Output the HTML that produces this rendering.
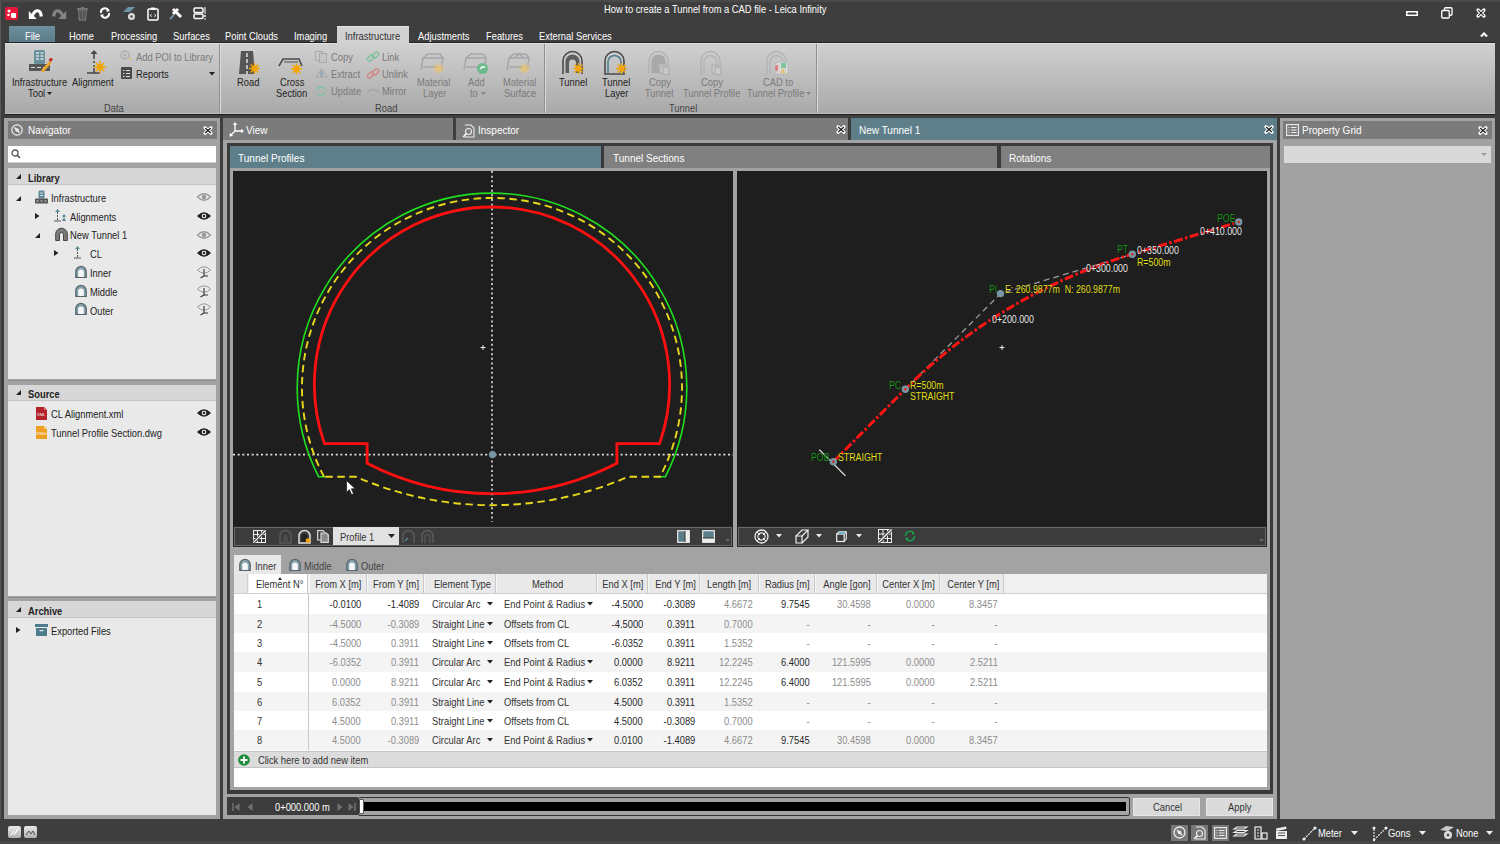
<!DOCTYPE html>
<html><head><meta charset="utf-8">
<style>
*{box-sizing:border-box;margin:0;padding:0}
html,body{width:1500px;height:844px;overflow:hidden;background:#3e3e3e;font-family:"Liberation Sans",sans-serif;font-size:11px;color:#222}
.a{position:absolute}
.t{position:absolute;white-space:nowrap;line-height:12px;font-size:11px;transform:scaleX(.85);transform-origin:0 0}
.w{color:#fff}
.g{color:#7a7a7a}
.b{font-weight:bold}
svg{position:absolute;overflow:visible}
.r{text-align:right;transform-origin:100% 0}
.h{transform:scaleX(.91)}
</style></head><body>
<!-- TITLE BAR -->
<div class="a" style="left:0;top:0;width:1px;height:844px;background:#585858"></div>
<div class="t w" style="left:604px;top:3px">How to create a Tunnel from a CAD file - Leica Infinity</div>
<div class="a" style="left:0;top:0;width:1500px;height:2px;background:#4a4a4a"></div>
<!-- QAT icons -->
<svg style="left:5px;top:7px" width="13" height="13"><rect x="0" y="0" width="13" height="13" rx="2" fill="#e8173a"/><circle cx="4" cy="4" r="1.5" fill="#fff"/><circle cx="3.5" cy="8" r="1.3" fill="#fff"/><rect x="6" y="6" width="5" height="5" rx="1" fill="#fff"/></svg>
<svg style="left:28px;top:7px" width="15" height="13"><path d="M0.8 12 L0.8 4 L8.8 12Z" fill="#fff"/><path d="M4.5 8.5 C7 2.5, 12.5 1.5, 13.3 9.5" stroke="#fff" stroke-width="3.2" fill="none"/></svg>
<svg style="left:52px;top:7px" width="15" height="13"><path d="M14.2 12 L14.2 4 L6.2 12Z" fill="#858585"/><path d="M10.5 8.5 C8 2.5, 2.5 1.5, 1.7 9.5" stroke="#858585" stroke-width="3.2" fill="none"/></svg>
<svg style="left:77px;top:7px" width="11" height="13"><rect x="0" y="1" width="11" height="1.5" fill="#777"/><rect x="4" y="0" width="3" height="1.5" fill="#777"/><path d="M1.5 3 L2.5 13 L8.5 13 L9.5 3 Z" fill="none" stroke="#777" stroke-width="1.3"/><path d="M4 4v8M5.5 4v8M7 4v8" stroke="#777" stroke-width=".8"/></svg>
<svg style="left:99px;top:7px" width="12" height="12"><path d="M2 6 A4 4 0 0 1 9.5 3.5" fill="none" stroke="#fff" stroke-width="2"/><path d="M10 6 A4 4 0 0 1 2.5 8.5" fill="none" stroke="#fff" stroke-width="2"/><path d="M8 1 L11 4 L7.5 5 Z M4 11 L1 8 L4.5 7 Z" fill="#fff"/></svg>
<svg style="left:123px;top:7px" width="14" height="14"><path d="M0 5 L5 0 L12 0 L7 5 Z" fill="#6b94a6"/><circle cx="8.5" cy="9.5" r="3.5" fill="#ddd"/><circle cx="8.5" cy="9.5" r="1.3" fill="#555"/></svg>
<svg style="left:147px;top:7px" width="12" height="14"><rect x="1" y="2" width="10" height="11" rx="1" fill="none" stroke="#fff" stroke-width="1.5"/><rect x="3.5" y="0.5" width="5" height="2.5" rx="1" fill="#fff"/><path d="M4.5 7.5 L3 8.5 L4.5 9.5 M7.5 7.5 L9 8.5 L7.5 9.5" stroke="#fff" stroke-width="1" fill="none"/></svg>
<svg style="left:169px;top:7px" width="14" height="13"><path d="M4 2 L12 10 M9 2 L4 7" stroke="#fff" stroke-width="3"/><path d="M1 12 L5 8" stroke="#6b94a6" stroke-width="2"/></svg>
<svg style="left:193px;top:7px" width="14" height="13"><rect x="1" y="1" width="9" height="4.5" rx="1.2" fill="none" stroke="#fff" stroke-width="1.5"/><rect x="1" y="7" width="9" height="4.5" rx="1.2" fill="none" stroke="#fff" stroke-width="1.5"/><path d="M12 0v7" stroke="#fff" stroke-width="1"/><circle cx="12" cy="9" r="1" fill="#fff"/><circle cx="12" cy="12" r=".8" fill="#fff"/></svg>
<!-- window controls -->
<svg style="left:1406px;top:11px" width="12" height="5"><rect x=".75" y=".75" width="10.5" height="3.5" fill="none" stroke="#fff" stroke-width="1.5"/></svg>
<svg style="left:1441px;top:7px" width="12" height="12"><rect x="3.5" y=".75" width="7.5" height="7.5" rx="1" fill="none" stroke="#fff" stroke-width="1.3"/><rect x=".75" y="3.5" width="7.5" height="7.5" rx="1" fill="#3e3e3e" stroke="#fff" stroke-width="1.3"/></svg>
<svg style="left:1476px;top:8px" width="10" height="10"><path d="M2 2 L8 8 M8 2 L2 8" stroke="#fff" stroke-width="3.2" stroke-linecap="round"/><path d="M2.2 2.2 L7.8 7.8 M7.8 2.2 L2.2 7.8" stroke="#2a2a2a" stroke-width="1.2"/></svg>
<svg style="left:1480px;top:31px" width="8" height="6"><path d="M0.5 5 L4 1.2 L7.5 5 L6 5.8 L4 3.6 L2 5.8Z" fill="#fff" stroke="#fff" stroke-width=".6"/></svg>

<!-- RIBBON TABS -->
<div class="a" style="left:9px;top:26px;width:46px;height:18px;background:linear-gradient(#6e909c,#587985)"></div>
<div class="t w" style="left:25px;top:30px">File</div>
<div class="t w" style="left:69px;top:30px">Home</div>
<div class="t w" style="left:111px;top:30px">Processing</div>
<div class="t w" style="left:173px;top:30px">Surfaces</div>
<div class="t w" style="left:225px;top:30px">Point Clouds</div>
<div class="t w" style="left:294px;top:30px">Imaging</div>
<div class="t w" style="left:418px;top:30px">Adjustments</div>
<div class="t w" style="left:486px;top:30px">Features</div>
<div class="t w" style="left:539px;top:30px">External Services</div>

<!-- RIBBON BODY -->
<div class="a" style="left:5px;top:42px;width:1490px;height:1px;background:#222"></div>
<div class="a" style="left:5px;top:43px;width:1490px;height:71px;background:linear-gradient(#d0d0d0,#a9a9a9);border-top:1px solid #e2e2e2;border-bottom:1px solid #bfbfbf"></div>
<div class="a" style="left:5px;top:114px;width:1490px;height:1px;background:#1e1e1e"></div>
<div class="a" style="left:337px;top:26px;width:72px;height:19px;background:#d1d1d1;border-top:1px solid #e6e6e6"></div>
<div class="t" style="left:345px;top:30px;color:#333">Infrastructure</div>
<div class="a" style="left:219px;top:44px;width:1px;height:69px;background:#8f8f8f"></div>
<div class="a" style="left:220px;top:44px;width:1px;height:69px;background:#dcdcdc"></div>
<div class="a" style="left:544px;top:44px;width:1px;height:69px;background:#8f8f8f"></div>
<div class="a" style="left:545px;top:44px;width:1px;height:69px;background:#dcdcdc"></div>
<div class="a" style="left:816px;top:44px;width:1px;height:69px;background:#8f8f8f"></div>
<div class="a" style="left:817px;top:44px;width:1px;height:69px;background:#dcdcdc"></div>
<!-- Data group -->
<svg style="left:27px;top:49px" width="28" height="26"><rect x="7" y="1" width="11" height="14" rx="1.5" fill="#6a8f9c"/><path d="M9 4h3M13.5 4h3M9 7h3M13.5 7h3M9 10h3M13.5 10h3" stroke="#d8e0e3" stroke-width="1.5"/><rect x="2" y="15" width="21" height="7" fill="#565656"/><path d="M4 18.5h4M10 18.5h4M16 18.5h3" stroke="#ddd" stroke-width="1"/><path d="M15 22.5 L23.5 13" stroke="#e8a92a" stroke-width="3"/><path d="M22.5 12 L25 9.5" stroke="#c0282a" stroke-width="3"/></svg>
<div class="t" style="left:12px;top:76px">Infrastructure</div>
<div class="t" style="left:28px;top:87px">Tool</div>
<svg style="left:47px;top:92px" width="5" height="3"><path d="M0 0h5L2.5 3z" fill="#222"/></svg>
<svg style="left:86px;top:49px" width="22" height="26"><path d="M8 1 L4.5 5 L11.5 5 Z" fill="#444"/><path d="M8 5v5M8 12v2M8 16v2" stroke="#444" stroke-width="1.5"/><path d="M1 24h13" stroke="#444" stroke-width="1.5"/><path d="M8 19v5" stroke="#444" stroke-width="1.5"/><g transform="translate(14,18)"><path d="M0 -6v12M-6 0h12M-4.2 -4.2l8.4 8.4M4.2 -4.2l-8.4 8.4" stroke="#f2a400" stroke-width="1.5"/><circle r="3" fill="#f2a400"/></g></svg>
<div class="t" style="left:72px;top:76px">Alignment</div>
<svg style="left:120px;top:50px" width="12" height="12"><circle cx="5" cy="5" r="4" fill="none" stroke="#aaa" stroke-width="1.3"/><circle cx="5" cy="5" r="1.5" fill="#aaa"/><path d="M9 8 l1.5 2 l1.5 -2z" fill="#e5b84a"/></svg>
<div class="t g" style="left:136px;top:51px">Add POI to Library</div>
<svg style="left:121px;top:67px" width="12" height="13"><rect x="0" y="0" width="11" height="12" rx="1" fill="#4b4b4b"/><path d="M2 3.5h1.5M5 3.5h4M2 6.5h1.5M5 6.5h4M2 9.5h1.5M5 9.5h4" stroke="#ddd" stroke-width="1"/></svg>
<div class="t" style="left:136px;top:68px">Reports</div>
<svg style="left:209px;top:72px" width="6" height="4"><path d="M0 0h6L3 3.5z" fill="#222"/></svg>
<div class="t" style="left:104px;top:102px;color:#444">Data</div>

<!-- Road group -->
<svg style="left:238px;top:50px" width="24" height="26"><path d="M3 1 L15 1 L17 24 L1 24 Z" fill="#565656"/><path d="M9 3v4M9 9v4M9 15v4M9 21v3" stroke="#fff" stroke-width="1.2"/><g transform="translate(16.5,18.5)"><path d="M0 -5.5v11M-5.5 0h11M-3.9 -3.9l7.8 7.8M3.9 -3.9l-7.8 7.8" stroke="#f2a400" stroke-width="1.4"/><circle r="3" fill="#f2a400"/></g></svg>
<div class="t" style="left:237px;top:76px">Road</div>
<svg style="left:278px;top:57px" width="28" height="20"><path d="M1 9 L5 2 L21 2 L24 9" fill="none" stroke="#4b4b4b" stroke-width="1.6"/><path d="M6 5h14" stroke="#4b4b4b" stroke-width="1"/><g transform="translate(18.5,12)"><path d="M0 -5.5v11M-5.5 0h11M-3.9 -3.9l7.8 7.8M3.9 -3.9l-7.8 7.8" stroke="#f2a400" stroke-width="1.4"/><circle r="3" fill="#f2a400"/></g></svg>
<div class="t" style="left:280px;top:76px">Cross</div>
<div class="t" style="left:276px;top:87px">Section</div>
<svg style="left:315px;top:51px" width="13" height="12"><rect x=".5" y=".5" width="7" height="9" fill="none" stroke="#aaa"/><rect x="4.5" y="2.5" width="7" height="9" fill="#c4c4c4" stroke="#aaa"/></svg>
<div class="t g" style="left:331px;top:51px">Copy</div>
<svg style="left:315px;top:68px" width="13" height="10"><path d="M1 9 L6.5 1 L12 9 Z" fill="none" stroke="#aaa" stroke-width="1.2"/><path d="M6.5 3v6" stroke="#8fa7b3" stroke-width="2.5"/></svg>
<div class="t g" style="left:331px;top:68px">Extract</div>
<svg style="left:315px;top:85px" width="12" height="12"><path d="M2 5 A4.5 4.5 0 0 1 10 4" fill="none" stroke="#7fc4a0" stroke-width="1.5"/><path d="M10 7 A4.5 4.5 0 0 1 2 8" fill="none" stroke="#7fc4a0" stroke-width="1.5"/></svg>
<div class="t g" style="left:331px;top:85px">Update</div>
<svg style="left:366px;top:50px" width="14" height="14"><rect x="1" y="6" width="7" height="4" rx="2" transform="rotate(-45 4.5 8)" fill="none" stroke="#80c29e" stroke-width="1.5"/><rect x="6" y="3" width="7" height="4" rx="2" transform="rotate(-45 9.5 5)" fill="none" stroke="#80c29e" stroke-width="1.5"/></svg>
<div class="t g" style="left:382px;top:51px">Link</div>
<svg style="left:366px;top:67px" width="14" height="14"><rect x="1" y="6" width="7" height="4" rx="2" transform="rotate(-45 4.5 8)" fill="none" stroke="#d08a8a" stroke-width="1.5"/><rect x="6" y="3" width="7" height="4" rx="2" transform="rotate(-45 9.5 5)" fill="none" stroke="#d08a8a" stroke-width="1.5"/></svg>
<div class="t g" style="left:382px;top:68px">Unlink</div>
<svg style="left:366px;top:87px" width="14" height="7"><path d="M1 6 Q7 -1 13 6" fill="none" stroke="#a6a6a6" stroke-width="1.5"/></svg>
<div class="t g" style="left:382px;top:85px">Mirror</div>
<svg style="left:420px;top:53px" width="26" height="22"><path d="M1 17 L3 5 L8 1 L20 1 L23 5 L21 17" fill="none" stroke="#a6a6a6" stroke-width="1.5"/><path d="M3 5h20M3 14h18" stroke="#a6a6a6" stroke-width="1.5"/><g transform="translate(18.5,15.5)"><path d="M0 -5.5v11M-5.5 0h11M-3.9 -3.9l7.8 7.8M3.9 -3.9l-7.8 7.8" stroke="#e5c27a" stroke-width="1.3"/><circle r="2.6" fill="#e5c27a"/></g></svg>
<div class="t g" style="left:417px;top:76px">Material</div>
<div class="t g" style="left:423px;top:87px">Layer</div>
<svg style="left:463px;top:53px" width="26" height="22"><path d="M1 17 L3 5 L8 1 L20 1 L23 5 L21 17" fill="none" stroke="#a6a6a6" stroke-width="1.5"/><path d="M3 5h20M3 14h18" stroke="#a6a6a6" stroke-width="1.5"/><circle cx="19.5" cy="15.5" r="5.5" fill="#6cba8c"/><path d="M17 16 L19 14 L22 14" stroke="#fff" stroke-width="1.3" fill="none"/></svg>
<div class="t g" style="left:468px;top:76px">Add</div>
<div class="t g" style="left:470px;top:87px">to</div>
<svg style="left:481px;top:92px" width="5" height="3"><path d="M0 0h5L2.5 3z" fill="#888"/></svg>
<svg style="left:506px;top:53px" width="26" height="22"><path d="M1 17 L3 5 L8 1 L20 1 L23 5 L21 17" fill="none" stroke="#a6a6a6" stroke-width="1.5"/><path d="M3 5h20M3 14h18M8 5 L13 1 L18 5" stroke="#a6a6a6" stroke-width="1.5" fill="none"/><g transform="translate(18.5,15.5)"><path d="M0 -5.5v11M-5.5 0h11M-3.9 -3.9l7.8 7.8M3.9 -3.9l-7.8 7.8" stroke="#e5c27a" stroke-width="1.3"/><circle r="2.6" fill="#e5c27a"/></g></svg>
<div class="t g" style="left:503px;top:76px">Material</div>
<div class="t g" style="left:504px;top:87px">Surface</div>
<div class="t" style="left:375px;top:102px;color:#444">Road</div>
<!-- Tunnel group -->
<svg style="left:561px;top:50px" width="26" height="26"><path d="M2 24 V11 A9.5 9.5 0 0 1 21 11 V24" fill="none" stroke="#4a4a4a" stroke-width="1.6"/><path d="M4.5 23 V11.5 A7 7 0 0 1 18.5 11.5 V23 H15 V13 A3.5 3.5 0 0 0 8 13 V23 Z" fill="#5d5d5d"/><g transform="translate(17.5,18.5)"><path d="M0 -5.5v11M-5.5 0h11M-3.9 -3.9l7.8 7.8M3.9 -3.9l-7.8 7.8" stroke="#f2a400" stroke-width="1.4"/><circle r="3" fill="#f2a400"/></g></svg>
<div class="t" style="left:559px;top:76px">Tunnel</div>
<svg style="left:603px;top:50px" width="26" height="26"><path d="M2 24 V11 A9.5 9.5 0 0 1 21 11 V24 Z" fill="none" stroke="#4a4a4a" stroke-width="1.6"/><path d="M5 23 V12 A6.5 6.5 0 0 1 18 12 V23" fill="none" stroke="#4c7f8e" stroke-width="1.5"/><g transform="translate(18.5,18.5)"><path d="M0 -5.5v11M-5.5 0h11M-3.9 -3.9l7.8 7.8M3.9 -3.9l-7.8 7.8" stroke="#f2a400" stroke-width="1.4"/><circle r="3" fill="#f2a400"/></g></svg>
<div class="t" style="left:602px;top:76px">Tunnel</div>
<div class="t" style="left:605px;top:87px">Layer</div>
<svg style="left:647px;top:50px" width="26" height="26"><path d="M2 24 V11 A9.5 9.5 0 0 1 21 11 V24" fill="none" stroke="#b3b3b3" stroke-width="1.4"/><path d="M4.5 23 V11.5 A7 7 0 0 1 18.5 11.5 V14 H12 V23 Z M8 23 V13 A3.5 3.5 0 0 1 12 10" fill="#a9a9a9"/><rect x="13" y="15" width="6" height="8" fill="#c9c9c9" stroke="#aaa"/><rect x="16" y="17" width="6" height="7.5" fill="#c9c9c9" stroke="#aaa"/></svg>
<div class="t g" style="left:649px;top:76px">Copy</div>
<div class="t g" style="left:645px;top:87px">Tunnel</div>
<svg style="left:699px;top:50px" width="26" height="26"><path d="M2 24 V11 A9.5 9.5 0 0 1 21 11 V24" fill="none" stroke="#b3b3b3" stroke-width="1.4"/><path d="M5 23 V12 A6.5 6.5 0 0 1 18 12 V14" fill="none" stroke="#b3b3b3" stroke-width="1.3"/><rect x="13" y="15" width="6" height="8" fill="#c9c9c9" stroke="#aaa"/><rect x="16" y="17" width="6" height="7.5" fill="#c9c9c9" stroke="#aaa"/></svg>
<div class="t g" style="left:701px;top:76px">Copy</div>
<div class="t g" style="left:683px;top:87px">Tunnel Profile</div>
<svg style="left:765px;top:50px" width="26" height="26"><path d="M2 24 V11 A9.5 9.5 0 0 1 21 11 V14" fill="none" stroke="#b3b3b3" stroke-width="1.4"/><path d="M5 23 V12 A6.5 6.5 0 0 1 18 12" fill="none" stroke="#b3b3b3" stroke-width="1.3"/><rect x="11" y="12" width="12" height="12" fill="#d8d8d8" stroke="#aaa" stroke-dasharray="1 1"/><path d="M13 15 A3 3 0 0 0 13 21 Z" fill="#e07b7b"/><path d="M16 13 h5 v5 h-5z" fill="#7cc49a"/><path d="M15 23 L18 18 L21 23 Z" fill="#e5c27a"/></svg>
<div class="t g" style="left:763px;top:76px">CAD to</div>
<div class="t g" style="left:747px;top:87px">Tunnel Profile</div>
<svg style="left:806px;top:92px" width="5" height="3"><path d="M0 0h5L2.5 3z" fill="#888"/></svg>
<div class="t" style="left:669px;top:102px;color:#444">Tunnel</div>
<!-- NAVIGATOR -->
<div class="a" style="left:4px;top:118px;width:216px;height:701px;background:#a2a2a2"></div>
<div class="a" style="left:8px;top:121px;width:209px;height:18px;background:#7b7b7b"></div>
<svg style="left:11px;top:124px" width="12" height="12"><circle cx="6" cy="6" r="5.2" fill="none" stroke="#eee" stroke-width="1.2"/><path d="M3.5 3.5 L8.5 8.5" stroke="#eee" stroke-width="1.5"/><circle cx="6" cy="6" r="1.8" fill="#eee"/></svg>
<div class="t w h" style="left:28px;top:124px">Navigator</div>
<svg style="left:203px;top:126px" width="10" height="9"><path d="M2 1.8 L8 7.2 M8 1.8 L2 7.2" stroke="#fff" stroke-width="3.2" stroke-linecap="round"/><path d="M2.2 2 L7.8 7 M7.8 2 L2.2 7" stroke="#1a1a1a" stroke-width="1.2"/></svg>
<div class="a" style="left:8px;top:146px;width:208px;height:17px;background:#fff;border-bottom:1px solid #cfcfcf"></div>
<svg style="left:11px;top:149px" width="10" height="10"><circle cx="4" cy="4" r="3" fill="none" stroke="#555" stroke-width="1.3"/><path d="M6.2 6.2 L9 9" stroke="#555" stroke-width="1.6"/></svg>
<!-- Library -->
<div class="a" style="left:8px;top:168px;width:208px;height:211px;background:#e9e9e9"></div>
<div class="a" style="left:8px;top:168px;width:208px;height:17px;background:#d7d7d7;border-bottom:1px solid #c4c4c4"></div>
<svg style="left:16px;top:174px" width="5" height="5"><path d="M5 0 V5 H0 Z" fill="#222"/></svg>
<div class="t b" style="left:28px;top:172px">Library</div>
<svg style="left:16px;top:196px" width="5" height="5"><path d="M5 0 V5 H0 Z" fill="#222"/></svg>
<svg style="left:35px;top:190px" width="13" height="14"><rect x="3.5" y="0.5" width="6" height="8" rx="1.2" fill="#5f8c99"/><path d="M5 3h3M5 5.5h3" stroke="#cfdde1" stroke-width="1"/><rect x="0" y="8.5" width="13" height="5" rx=".8" fill="#555"/><path d="M1.5 11h2M5.5 11h2M9.5 11h2" stroke="#ddd" stroke-width="1"/></svg>
<div class="t" style="left:51px;top:192px">Infrastructure</div>
<svg style="left:35px;top:213px" width="5" height="6"><path d="M0 0 L4.5 3 L0 6Z" fill="#222"/></svg>
<svg style="left:54px;top:209px" width="14" height="13"><path d="M3.5 0 L1 3 H6 Z" fill="#5a8a98"/><path d="M3.5 3v2M3.5 6v2M3.5 9v2" stroke="#555" stroke-width="1"/><path d="M0 12h7" stroke="#555" stroke-width="1"/><circle cx="10" cy="7" r="1.5" fill="#5a8a98"/><path d="M8 12 L10 8.5 L12 12Z" fill="#5a8a98"/></svg>
<div class="t" style="left:70px;top:211px">Alignments</div>
<svg style="left:35px;top:233px" width="5" height="5"><path d="M5 0 V5 H0 Z" fill="#222"/></svg>
<svg style="left:55px;top:228px" width="13" height="13"><path d="M0.7 12.5 V6 A5.8 5.8 0 0 1 12.3 6 V12.5 H8.5 V6.5 A2 2 0 0 0 4.5 6.5 V12.5 Z" fill="#7a7a7a" stroke="#444" stroke-width="1"/></svg>
<div class="t" style="left:70px;top:229px">New Tunnel 1</div>
<svg style="left:54px;top:250px" width="5" height="6"><path d="M0 0 L4.5 3 L0 6Z" fill="#222"/></svg>
<svg style="left:74px;top:246px" width="8" height="13"><path d="M3.5 0 L1 3 H6 Z" fill="#5a8a98"/><path d="M3.5 3v2M3.5 6v2M3.5 9v2" stroke="#555" stroke-width="1"/><path d="M0 12h7" stroke="#555" stroke-width="1"/></svg>
<div class="t" style="left:90px;top:248px">CL</div>
<svg style="left:75px;top:266px" width="12" height="12"><path d="M0.8 11.4 V5.6 A5.2 5.2 0 0 1 11.2 5.6 V11.4 Z" fill="#86a2aa" stroke="#56666b" stroke-width="1.3"/><path d="M3.2 11 V6.2 A2.8 2.8 0 0 1 8.8 6.2 V11 Z" fill="#f6f6f6"/></svg>
<div class="t" style="left:90px;top:267px">Inner</div>
<svg style="left:75px;top:285px" width="12" height="12"><path d="M0.8 11.4 V5.6 A5.2 5.2 0 0 1 11.2 5.6 V11.4 Z" fill="#86a2aa" stroke="#56666b" stroke-width="1.3"/><path d="M3.2 11 V6.2 A2.8 2.8 0 0 1 8.8 6.2 V11 Z" fill="#f6f6f6"/></svg>
<div class="t" style="left:90px;top:286px">Middle</div>
<svg style="left:75px;top:303px" width="12" height="12"><path d="M0.8 11.4 V5.6 A5.2 5.2 0 0 1 11.2 5.6 V11.4 Z" fill="#86a2aa" stroke="#56666b" stroke-width="1.3"/><path d="M3.2 11 V6.2 A2.8 2.8 0 0 1 8.8 6.2 V11 Z" fill="#f6f6f6"/></svg>
<div class="t" style="left:90px;top:305px">Outer</div>
<!-- eyes -->
<svg style="left:197px;top:193px" width="14" height="8"><path d="M0.5 4 Q7 -2.5 13.5 4 Q7 10.5 0.5 4Z" fill="none" stroke="#999" stroke-width="1.2"/><circle cx="7" cy="4" r="2.3" fill="#999"/></svg>
<svg style="left:197px;top:212px" width="14" height="8"><path d="M0.5 4 Q7 -2.5 13.5 4 Q7 10.5 0.5 4Z" fill="#222" stroke="#222" stroke-width="1"/><circle cx="7" cy="4" r="2.3" fill="#fff"/><circle cx="7" cy="4" r="1.3" fill="#222"/></svg>
<svg style="left:197px;top:231px" width="14" height="8"><path d="M0.5 4 Q7 -2.5 13.5 4 Q7 10.5 0.5 4Z" fill="none" stroke="#999" stroke-width="1.2"/><circle cx="7" cy="4" r="2.3" fill="#999"/></svg>
<svg style="left:197px;top:249px" width="14" height="8"><path d="M0.5 4 Q7 -2.5 13.5 4 Q7 10.5 0.5 4Z" fill="#222" stroke="#222" stroke-width="1"/><circle cx="7" cy="4" r="2.3" fill="#fff"/><circle cx="7" cy="4" r="1.3" fill="#222"/></svg>
<svg style="left:197px;top:266px" width="14" height="13"><path d="M0.5 4 Q7 -2.5 13.5 4 Q7 10.5 0.5 4Z" fill="none" stroke="#999" stroke-width="1"/><path d="M7 3v7M7 10 L3.5 12M7 10h4" stroke="#333" stroke-width="1.1"/></svg>
<svg style="left:197px;top:285px" width="14" height="13"><path d="M0.5 4 Q7 -2.5 13.5 4 Q7 10.5 0.5 4Z" fill="none" stroke="#999" stroke-width="1"/><path d="M7 3v7M7 10 L3.5 12M7 10h4" stroke="#333" stroke-width="1.1"/></svg>
<svg style="left:197px;top:303px" width="14" height="13"><path d="M0.5 4 Q7 -2.5 13.5 4 Q7 10.5 0.5 4Z" fill="none" stroke="#999" stroke-width="1"/><path d="M7 3v7M7 10 L3.5 12M7 10h4" stroke="#333" stroke-width="1.1"/></svg>
<!-- Source -->
<div class="a" style="left:8px;top:380px;width:208px;height:1px;background:#8c8c8c"></div>
<div class="a" style="left:8px;top:385px;width:208px;height:211px;background:#e9e9e9"></div>
<div class="a" style="left:8px;top:385px;width:208px;height:16px;background:#d7d7d7;border-bottom:1px solid #c4c4c4"></div>
<svg style="left:16px;top:390px" width="5" height="5"><path d="M5 0 V5 H0 Z" fill="#222"/></svg>
<div class="t b" style="left:28px;top:388px">Source</div>
<svg style="left:36px;top:407px" width="11" height="13"><path d="M0 0 H8 L11 3 V13 H0 Z" fill="#b3232b"/><path d="M8 0 V3 H11" fill="#e07070"/><text x="1" y="9" font-size="4" fill="#fff" font-family="Liberation Sans">XML</text></svg>
<div class="t" style="left:51px;top:408px">CL Alignment.xml</div>
<svg style="left:36px;top:426px" width="11" height="13"><path d="M0 0 H8 L11 3 V13 H0 Z" fill="#f0a020"/><path d="M8 0 V3 H11" fill="#f8d080"/><text x="0.5" y="9" font-size="4" fill="#fff" font-family="Liberation Sans">DWG</text></svg>
<div class="t" style="left:51px;top:427px">Tunnel Profile Section.dwg</div>
<svg style="left:197px;top:409px" width="14" height="8"><path d="M0.5 4 Q7 -2.5 13.5 4 Q7 10.5 0.5 4Z" fill="#222" stroke="#222" stroke-width="1"/><circle cx="7" cy="4" r="2.3" fill="#fff"/><circle cx="7" cy="4" r="1.3" fill="#222"/></svg>
<svg style="left:197px;top:428px" width="14" height="8"><path d="M0.5 4 Q7 -2.5 13.5 4 Q7 10.5 0.5 4Z" fill="#222" stroke="#222" stroke-width="1"/><circle cx="7" cy="4" r="2.3" fill="#fff"/><circle cx="7" cy="4" r="1.3" fill="#222"/></svg>
<!-- Archive -->
<div class="a" style="left:8px;top:597px;width:208px;height:1px;background:#8c8c8c"></div>
<div class="a" style="left:8px;top:601px;width:208px;height:214px;background:#e9e9e9"></div>
<div class="a" style="left:8px;top:601px;width:208px;height:17px;background:#d7d7d7;border-bottom:1px solid #c4c4c4"></div>
<svg style="left:16px;top:607px" width="5" height="5"><path d="M5 0 V5 H0 Z" fill="#222"/></svg>
<div class="t b" style="left:28px;top:605px">Archive</div>
<svg style="left:16px;top:627px" width="5" height="6"><path d="M0 0 L4.5 3 L0 6Z" fill="#222"/></svg>
<svg style="left:35px;top:624px" width="13" height="12"><rect x="0" y="0" width="13" height="3" fill="#4d7c8a"/><rect x="1" y="4" width="11" height="8" fill="#4d7c8a"/><rect x="4.5" y="6" width="4" height="1.2" fill="#e9e9e9"/></svg>
<div class="t" style="left:51px;top:625px">Exported Files</div>
<!-- CENTER FRAME -->
<div class="a" style="left:223px;top:118px;width:1054px;height:701px;background:#a3a3a3"></div>
<div class="a" style="left:223px;top:118px;width:230px;height:22px;background:#7b7b7b"></div>
<div class="a" style="left:453px;top:118px;width:3px;height:22px;background:#3e3e3e"></div>
<div class="a" style="left:456px;top:118px;width:392px;height:22px;background:#7b7b7b"></div>
<div class="a" style="left:848px;top:118px;width:3px;height:22px;background:#3e3e3e"></div>
<div class="a" style="left:851px;top:118px;width:426px;height:22px;background:#5e7f8a"></div>
<svg style="left:229px;top:122px" width="15" height="15"><path d="M6 2 V9 L1.5 13.5 M6 9 H13" stroke="#fff" stroke-width="1.3" fill="none"/><path d="M6 0 L3.8 3 H8.2Z M15 9 L12 6.8 V11.2Z M0.5 14.5 L1 10.8 L4.2 14Z" fill="#fff"/></svg>
<div class="t w h" style="left:246px;top:124px">View</div>
<svg style="left:462px;top:124px" width="13" height="14"><path d="M3 1 H9 L12 4 V13 H3 V10" fill="none" stroke="#eee" stroke-width="1.1"/><circle cx="6.5" cy="7.5" r="3" fill="none" stroke="#eee" stroke-width="1.1"/><path d="M4.5 9.5 L1 13" stroke="#eee" stroke-width="1.5"/></svg>
<div class="t w h" style="left:478px;top:124px">Inspector</div>
<svg style="left:836px;top:125px" width="10" height="9"><path d="M2 1.8 L8 7.2 M8 1.8 L2 7.2" stroke="#fff" stroke-width="3.2" stroke-linecap="round"/><path d="M2.2 2 L7.8 7 M7.8 2 L2.2 7" stroke="#1a1a1a" stroke-width="1.2"/></svg>
<div class="t w h" style="left:859px;top:124px">New Tunnel 1</div>
<svg style="left:1264px;top:125px" width="10" height="9"><path d="M2 1.8 L8 7.2 M8 1.8 L2 7.2" stroke="#fff" stroke-width="3.2" stroke-linecap="round"/><path d="M2.2 2 L7.8 7 M7.8 2 L2.2 7" stroke="#1a1a1a" stroke-width="1.2"/></svg>
<!-- inner dark frame -->
<div class="a" style="left:227px;top:143px;width:1046px;height:651px;background:#3a3a3a"></div>
<div class="a" style="left:230px;top:146px;width:1040px;height:644px;background:#a3a3a3"></div>
<!-- sub tabs -->
<div class="a" style="left:230px;top:146px;width:371px;height:22px;background:#5e7f8a"></div>
<div class="a" style="left:601px;top:146px;width:3px;height:22px;background:#3a3a3a"></div>
<div class="a" style="left:604px;top:146px;width:393px;height:22px;background:#808080"></div>
<div class="a" style="left:997px;top:146px;width:4px;height:22px;background:#3a3a3a"></div>
<div class="a" style="left:1001px;top:146px;width:269px;height:22px;background:#808080"></div>
<div class="t w h" style="left:238px;top:152px">Tunnel Profiles</div>
<div class="t w h" style="left:613px;top:152px">Tunnel Sections</div>
<div class="t w h" style="left:1009px;top:152px">Rotations</div>
<!-- canvases -->
<div class="a" style="left:233px;top:171px;width:500px;height:355px;background:#1e1e1e"></div>
<div class="a" style="left:737px;top:171px;width:530px;height:355px;background:#1e1e1e"></div>
<!-- canvas toolbars -->
<div class="a" style="left:233px;top:526px;width:500px;height:21px;background:#3c3c3c;border:1px solid #262626;box-shadow:inset 0 0 0 1px #686868"></div>
<div class="a" style="left:737px;top:526px;width:530px;height:21px;background:#3c3c3c;border:1px solid #262626;box-shadow:inset 0 0 0 1px #686868"></div>
<!-- TABLE -->
<div class="a" style="left:234px;top:555px;width:47px;height:19px;background:#e8e8e8"></div>
<svg style="left:239px;top:559px" width="12" height="12"><path d="M0.8 11.4 V5.6 A5.2 5.2 0 0 1 11.2 5.6 V11.4 Z" fill="#86a2aa" stroke="#56666b" stroke-width="1.3"/><path d="M3.2 11 V6.2 A2.8 2.8 0 0 1 8.8 6.2 V11 Z" fill="#f6f6f6"/></svg>
<div class="t" style="left:255px;top:560px;color:#333">Inner</div>
<svg style="left:289px;top:559px" width="12" height="12"><path d="M0.8 11.4 V5.6 A5.2 5.2 0 0 1 11.2 5.6 V11.4 Z" fill="#86a2aa" stroke="#56666b" stroke-width="1.3"/><path d="M3.2 11 V6.2 A2.8 2.8 0 0 1 8.8 6.2 V11 Z" fill="#f6f6f6"/></svg>
<div class="t" style="left:304px;top:560px;color:#444">Middle</div>
<svg style="left:346px;top:559px" width="12" height="12"><path d="M0.8 11.4 V5.6 A5.2 5.2 0 0 1 11.2 5.6 V11.4 Z" fill="#86a2aa" stroke="#56666b" stroke-width="1.3"/><path d="M3.2 11 V6.2 A2.8 2.8 0 0 1 8.8 6.2 V11 Z" fill="#f6f6f6"/></svg>
<div class="t" style="left:361px;top:560px;color:#444">Outer</div>
<div class="a" style="left:234px;top:574px;width:1033px;height:213px;background:#fff"></div>
<div class="a" style="left:234px;top:574px;width:1033px;height:20px;background:#f0f0f0;border-bottom:1px solid #cfcfcf"></div>
<div class="a" style="left:234px;top:574px;width:14px;height:19px;background:#e6e6e6;border-right:1px solid #cfcfcf"></div>
<div class="a" style="left:309px;top:574px;width:58px;height:19px;background:#e9e9e9;border-left:1px solid #f7f7f7;border-right:1px solid #c9c9c9"></div>
<div class="a" style="left:367px;top:574px;width:57px;height:19px;background:#e9e9e9;border-left:1px solid #f7f7f7;border-right:1px solid #c9c9c9"></div>
<div class="a" style="left:424px;top:574px;width:72px;height:19px;background:#e9e9e9;border-left:1px solid #f7f7f7;border-right:1px solid #c9c9c9"></div>
<div class="a" style="left:496px;top:574px;width:101px;height:19px;background:#e9e9e9;border-left:1px solid #f7f7f7;border-right:1px solid #c9c9c9"></div>
<div class="a" style="left:597px;top:574px;width:51px;height:19px;background:#e9e9e9;border-left:1px solid #f7f7f7;border-right:1px solid #c9c9c9"></div>
<div class="a" style="left:648px;top:574px;width:52px;height:19px;background:#e9e9e9;border-left:1px solid #f7f7f7;border-right:1px solid #c9c9c9"></div>
<div class="a" style="left:700px;top:574px;width:59px;height:19px;background:#e9e9e9;border-left:1px solid #f7f7f7;border-right:1px solid #c9c9c9"></div>
<div class="a" style="left:759px;top:574px;width:56px;height:19px;background:#e9e9e9;border-left:1px solid #f7f7f7;border-right:1px solid #c9c9c9"></div>
<div class="a" style="left:815px;top:574px;width:62px;height:19px;background:#e9e9e9;border-left:1px solid #f7f7f7;border-right:1px solid #c9c9c9"></div>
<div class="a" style="left:877px;top:574px;width:63px;height:19px;background:#e9e9e9;border-left:1px solid #f7f7f7;border-right:1px solid #c9c9c9"></div>
<div class="a" style="left:940px;top:574px;width:64px;height:19px;background:#e9e9e9;border-left:1px solid #f7f7f7;border-right:1px solid #c9c9c9"></div>
<div class="a" style="left:249px;top:574px;width:59px;height:19px;background:#fff;border-right:1px solid #c9c9c9"></div>
<div class="t" style="left:256px;top:578px;color:#333">Element N°</div>
<div class="t r" style="right:1139px;top:578px;color:#333">From X [m]</div>
<div class="t r" style="right:1081px;top:578px;color:#333">From Y [m]</div>
<div class="t" style="left:434px;top:578px;color:#333">Element Type</div>
<div class="t" style="left:532px;top:578px;color:#333">Method</div>
<div class="t r" style="right:857px;top:578px;color:#333">End X [m]</div>
<div class="t r" style="right:804px;top:578px;color:#333">End Y [m]</div>
<div class="t" style="left:707px;top:578px;color:#333">Length [m]</div>
<div class="t r" style="right:690px;top:578px;color:#333">Radius [m]</div>
<div class="t r" style="right:629px;top:578px;color:#333">Angle [gon]</div>
<div class="t r" style="right:565px;top:578px;color:#333">Center X [m]</div>
<div class="t r" style="right:501px;top:578px;color:#333">Center Y [m]</div>
<svg style="left:278px;top:577px" width="4" height="3"><path d="M0 3 L2 0 L4 3Z" fill="#333"/></svg>
<div class="t" style="left:257px;top:598px;color:#333">1</div>
<div class="t r" style="right:1139px;top:598px;color:#2a2a2a">-0.0100</div>
<div class="t r" style="right:1081px;top:598px;color:#2a2a2a">-1.4089</div>
<div class="t" style="left:432px;top:598px;color:#333">Circular Arc</div>
<svg style="left:487px;top:602px" width="6" height="4"><path d="M0 0h6L3 3.5z" fill="#222"/></svg>
<div class="t" style="left:504px;top:598px;color:#333">End Point &amp; Radius</div>
<svg style="left:587px;top:602px" width="6" height="4"><path d="M0 0h6L3 3.5z" fill="#222"/></svg>
<div class="t r" style="right:857px;top:598px;color:#2a2a2a">-4.5000</div>
<div class="t r" style="right:805px;top:598px;color:#2a2a2a">-0.3089</div>
<div class="t r" style="right:747px;top:598px;color:#8c8c8c">4.6672</div>
<div class="t r" style="right:690px;top:598px;color:#2a2a2a">9.7545</div>
<div class="t r" style="right:629px;top:598px;color:#8c8c8c">30.4598</div>
<div class="t r" style="right:565px;top:598px;color:#8c8c8c">0.0000</div>
<div class="t r" style="right:502px;top:598px;color:#8c8c8c">8.3457</div>
<div class="a" style="left:234px;top:614px;width:1033px;height:19px;background:#f4f4f4"></div>
<div class="t" style="left:257px;top:618px;color:#333">2</div>
<div class="t r" style="right:1139px;top:618px;color:#8c8c8c">-4.5000</div>
<div class="t r" style="right:1081px;top:618px;color:#8c8c8c">-0.3089</div>
<div class="t" style="left:432px;top:618px;color:#333">Straight Line</div>
<svg style="left:487px;top:622px" width="6" height="4"><path d="M0 0h6L3 3.5z" fill="#222"/></svg>
<div class="t" style="left:504px;top:618px;color:#333">Offsets from CL</div>
<div class="t r" style="right:857px;top:618px;color:#2a2a2a">-4.5000</div>
<div class="t r" style="right:805px;top:618px;color:#2a2a2a">0.3911</div>
<div class="t r" style="right:747px;top:618px;color:#8c8c8c">0.7000</div>
<div class="t r" style="right:690px;top:618px;color:#8c8c8c">-</div>
<div class="t r" style="right:629px;top:618px;color:#8c8c8c">-</div>
<div class="t r" style="right:565px;top:618px;color:#8c8c8c">-</div>
<div class="t r" style="right:502px;top:618px;color:#8c8c8c">-</div>
<div class="t" style="left:257px;top:637px;color:#333">3</div>
<div class="t r" style="right:1139px;top:637px;color:#8c8c8c">-4.5000</div>
<div class="t r" style="right:1081px;top:637px;color:#8c8c8c">0.3911</div>
<div class="t" style="left:432px;top:637px;color:#333">Straight Line</div>
<svg style="left:487px;top:641px" width="6" height="4"><path d="M0 0h6L3 3.5z" fill="#222"/></svg>
<div class="t" style="left:504px;top:637px;color:#333">Offsets from CL</div>
<div class="t r" style="right:857px;top:637px;color:#2a2a2a">-6.0352</div>
<div class="t r" style="right:805px;top:637px;color:#2a2a2a">0.3911</div>
<div class="t r" style="right:747px;top:637px;color:#8c8c8c">1.5352</div>
<div class="t r" style="right:690px;top:637px;color:#8c8c8c">-</div>
<div class="t r" style="right:629px;top:637px;color:#8c8c8c">-</div>
<div class="t r" style="right:565px;top:637px;color:#8c8c8c">-</div>
<div class="t r" style="right:502px;top:637px;color:#8c8c8c">-</div>
<div class="a" style="left:234px;top:652px;width:1033px;height:20px;background:#f4f4f4"></div>
<div class="t" style="left:257px;top:656px;color:#333">4</div>
<div class="t r" style="right:1139px;top:656px;color:#8c8c8c">-6.0352</div>
<div class="t r" style="right:1081px;top:656px;color:#8c8c8c">0.3911</div>
<div class="t" style="left:432px;top:656px;color:#333">Circular Arc</div>
<svg style="left:487px;top:660px" width="6" height="4"><path d="M0 0h6L3 3.5z" fill="#222"/></svg>
<div class="t" style="left:504px;top:656px;color:#333">End Point &amp; Radius</div>
<svg style="left:587px;top:660px" width="6" height="4"><path d="M0 0h6L3 3.5z" fill="#222"/></svg>
<div class="t r" style="right:857px;top:656px;color:#2a2a2a">0.0000</div>
<div class="t r" style="right:805px;top:656px;color:#2a2a2a">8.9211</div>
<div class="t r" style="right:747px;top:656px;color:#8c8c8c">12.2245</div>
<div class="t r" style="right:690px;top:656px;color:#2a2a2a">6.4000</div>
<div class="t r" style="right:629px;top:656px;color:#8c8c8c">121.5995</div>
<div class="t r" style="right:565px;top:656px;color:#8c8c8c">0.0000</div>
<div class="t r" style="right:502px;top:656px;color:#8c8c8c">2.5211</div>
<div class="t" style="left:257px;top:676px;color:#333">5</div>
<div class="t r" style="right:1139px;top:676px;color:#8c8c8c">0.0000</div>
<div class="t r" style="right:1081px;top:676px;color:#8c8c8c">8.9211</div>
<div class="t" style="left:432px;top:676px;color:#333">Circular Arc</div>
<svg style="left:487px;top:680px" width="6" height="4"><path d="M0 0h6L3 3.5z" fill="#222"/></svg>
<div class="t" style="left:504px;top:676px;color:#333">End Point &amp; Radius</div>
<svg style="left:587px;top:680px" width="6" height="4"><path d="M0 0h6L3 3.5z" fill="#222"/></svg>
<div class="t r" style="right:857px;top:676px;color:#2a2a2a">6.0352</div>
<div class="t r" style="right:805px;top:676px;color:#2a2a2a">0.3911</div>
<div class="t r" style="right:747px;top:676px;color:#8c8c8c">12.2245</div>
<div class="t r" style="right:690px;top:676px;color:#2a2a2a">6.4000</div>
<div class="t r" style="right:629px;top:676px;color:#8c8c8c">121.5995</div>
<div class="t r" style="right:565px;top:676px;color:#8c8c8c">0.0000</div>
<div class="t r" style="right:502px;top:676px;color:#8c8c8c">2.5211</div>
<div class="a" style="left:234px;top:692px;width:1033px;height:19px;background:#f4f4f4"></div>
<div class="t" style="left:257px;top:696px;color:#333">6</div>
<div class="t r" style="right:1139px;top:696px;color:#8c8c8c">6.0352</div>
<div class="t r" style="right:1081px;top:696px;color:#8c8c8c">0.3911</div>
<div class="t" style="left:432px;top:696px;color:#333">Straight Line</div>
<svg style="left:487px;top:700px" width="6" height="4"><path d="M0 0h6L3 3.5z" fill="#222"/></svg>
<div class="t" style="left:504px;top:696px;color:#333">Offsets from CL</div>
<div class="t r" style="right:857px;top:696px;color:#2a2a2a">4.5000</div>
<div class="t r" style="right:805px;top:696px;color:#2a2a2a">0.3911</div>
<div class="t r" style="right:747px;top:696px;color:#8c8c8c">1.5352</div>
<div class="t r" style="right:690px;top:696px;color:#8c8c8c">-</div>
<div class="t r" style="right:629px;top:696px;color:#8c8c8c">-</div>
<div class="t r" style="right:565px;top:696px;color:#8c8c8c">-</div>
<div class="t r" style="right:502px;top:696px;color:#8c8c8c">-</div>
<div class="t" style="left:257px;top:715px;color:#333">7</div>
<div class="t r" style="right:1139px;top:715px;color:#8c8c8c">4.5000</div>
<div class="t r" style="right:1081px;top:715px;color:#8c8c8c">0.3911</div>
<div class="t" style="left:432px;top:715px;color:#333">Straight Line</div>
<svg style="left:487px;top:719px" width="6" height="4"><path d="M0 0h6L3 3.5z" fill="#222"/></svg>
<div class="t" style="left:504px;top:715px;color:#333">Offsets from CL</div>
<div class="t r" style="right:857px;top:715px;color:#2a2a2a">4.5000</div>
<div class="t r" style="right:805px;top:715px;color:#2a2a2a">-0.3089</div>
<div class="t r" style="right:747px;top:715px;color:#8c8c8c">0.7000</div>
<div class="t r" style="right:690px;top:715px;color:#8c8c8c">-</div>
<div class="t r" style="right:629px;top:715px;color:#8c8c8c">-</div>
<div class="t r" style="right:565px;top:715px;color:#8c8c8c">-</div>
<div class="t r" style="right:502px;top:715px;color:#8c8c8c">-</div>
<div class="a" style="left:234px;top:730px;width:1033px;height:20px;background:#f4f4f4"></div>
<div class="t" style="left:257px;top:734px;color:#333">8</div>
<div class="t r" style="right:1139px;top:734px;color:#8c8c8c">4.5000</div>
<div class="t r" style="right:1081px;top:734px;color:#8c8c8c">-0.3089</div>
<div class="t" style="left:432px;top:734px;color:#333">Circular Arc</div>
<svg style="left:487px;top:738px" width="6" height="4"><path d="M0 0h6L3 3.5z" fill="#222"/></svg>
<div class="t" style="left:504px;top:734px;color:#333">End Point &amp; Radius</div>
<svg style="left:587px;top:738px" width="6" height="4"><path d="M0 0h6L3 3.5z" fill="#222"/></svg>
<div class="t r" style="right:857px;top:734px;color:#2a2a2a">0.0100</div>
<div class="t r" style="right:805px;top:734px;color:#2a2a2a">-1.4089</div>
<div class="t r" style="right:747px;top:734px;color:#8c8c8c">4.6672</div>
<div class="t r" style="right:690px;top:734px;color:#2a2a2a">9.7545</div>
<div class="t r" style="right:629px;top:734px;color:#8c8c8c">30.4598</div>
<div class="t r" style="right:565px;top:734px;color:#8c8c8c">0.0000</div>
<div class="t r" style="right:502px;top:734px;color:#8c8c8c">8.3457</div>
<div class="a" style="left:308px;top:594px;width:1px;height:156px;background:#c9c9c9"></div>
<div class="a" style="left:234px;top:751px;width:1033px;height:17px;background:#dcdcdc;border-top:1px solid #c4c4c4;border-bottom:1px solid #c4c4c4"></div>
<svg style="left:238px;top:754px" width="12" height="12"><circle cx="6" cy="6" r="5.8" fill="#1a8f3a"/><path d="M6 2.5v7M2.5 6h7" stroke="#fff" stroke-width="1.8"/></svg>
<div class="t" style="left:258px;top:754px;color:#333">Click here to add new item</div>
<svg style="left:233px;top:171px" width="500" height="355" viewBox="233 171 500 355">
<path d="M492 171 V522" stroke="#e0e0e0" stroke-width="1.6" stroke-dasharray="2 2.67"/>
<path d="M233 454.6 H733" stroke="#e0e0e0" stroke-width="1.6" stroke-dasharray="2 2.67"/>
<path d="M325 476.7 H318.6 A194.8 194.8 0 1 1 665.4 476.7 H659" fill="none" stroke="#1ee01e" stroke-width="1.6"/>
<path d="M324.0 476.7 A190 190 0 1 1 660.0 476.7 H628.1 A339.2 339.2 0 0 1 355.9 476.7 Z" fill="none" stroke="#e8d81c" stroke-width="1.9" stroke-dasharray="7.5 4.5"/>
<path d="M491.7 493.7 A270.7 270.7 0 0 1 367.1 463.2 L367.1 443.7 L324.5 443.7 A177.6 177.6 0 0 1 492.0 207.0 A177.6 177.6 0 0 1 659.5 443.7 L616.9 443.7 L616.9 463.2 A270.7 270.7 0 0 1 492.3 493.7" fill="none" stroke="#ff1010" stroke-width="2.8" stroke-linejoin="miter"/>
<circle cx="492.5" cy="454.6" r="3.6" fill="#7896a3"/>
<path d="M480.5 347.5h5M483 345v5" stroke="#eee" stroke-width="1"/>
<path d="M346.5 480.5 V492.5 L349.3 489.6 L351.6 494.6 L353.6 493.7 L351.4 488.8 L355.3 488.8 Z" fill="#fff" stroke="#222" stroke-width=".8"/>
</svg>
<svg style="left:737px;top:171px" width="530" height="355" viewBox="737 171 530 355">
<path d="M905.3 389.2 L1000.5 293.6 L1132.3 254.2" fill="none" stroke="#9a9a9a" stroke-width="1.3" stroke-dasharray="6 4"/>
<path d="M833.4 461.7 L905.3 389.2 A535.7 535.7 0 0 1 1132.3 254.2 L1234 223.4" fill="none" stroke="#ff1414" stroke-width="3" stroke-dasharray="9 2.5 2.5 2.5"/>
<path d="M819.2 449.6 L845.5 475.9" stroke="#e8e8e8" stroke-width="1.3"/>
<circle cx="833.4" cy="461.7" r="3.7" fill="#7896a3"/>
<circle cx="905.3" cy="389.2" r="3.7" fill="#7896a3"/>
<circle cx="1000.5" cy="293.6" r="3.7" fill="#7896a3"/>
<circle cx="1132.3" cy="254.2" r="3.7" fill="#7896a3"/>
<circle cx="1238.7" cy="222" r="3.7" fill="#7896a3"/>
<circle cx="833.4" cy="461.7" r="1.2" fill="#e02020"/>
<circle cx="905.3" cy="389.2" r="1.2" fill="#e02020"/>
<circle cx="1132.3" cy="254.2" r="1.2" fill="#e02020"/>
<circle cx="1238.7" cy="222" r="1.2" fill="#e02020"/>
<path d="M999.5 347.5h5M1002 345v5" stroke="#eee" stroke-width="1"/>
</svg>
<div class="a" style="left:811px;top:452px;white-space:nowrap;font-size:10px;line-height:11px;letter-spacing:0;transform:scaleX(.88);transform-origin:0 0;color:#1f9a1f;text-shadow:0 0 1px #000">POB</div>
<div class="a" style="left:838px;top:452px;white-space:nowrap;font-size:10px;line-height:11px;letter-spacing:0;transform:scaleX(.88);transform-origin:0 0;color:#e8e020;text-shadow:0 0 1px #000">STRAIGHT</div>
<div class="a" style="left:889px;top:380px;white-space:nowrap;font-size:10px;line-height:11px;letter-spacing:0;transform:scaleX(.88);transform-origin:0 0;color:#1f9a1f;text-shadow:0 0 1px #000">PC</div>
<div class="a" style="left:910px;top:380px;white-space:nowrap;font-size:10px;line-height:11px;letter-spacing:0;transform:scaleX(.88);transform-origin:0 0;color:#e8e020;text-shadow:0 0 1px #000">R=500m</div>
<div class="a" style="left:910px;top:391px;white-space:nowrap;font-size:10px;line-height:11px;letter-spacing:0;transform:scaleX(.88);transform-origin:0 0;color:#e8e020;text-shadow:0 0 1px #000">STRAIGHT</div>
<div class="a" style="left:989px;top:284px;white-space:nowrap;font-size:10px;line-height:11px;letter-spacing:0;transform:scaleX(.88);transform-origin:0 0;color:#1f9a1f;text-shadow:0 0 1px #000">PI</div>
<div class="a" style="left:1005px;top:284px;white-space:nowrap;font-size:10px;line-height:11px;letter-spacing:0;transform:scaleX(.88);transform-origin:0 0;color:#e8e020;text-shadow:0 0 1px #000">E: 260.9877m&nbsp; N: 260.9877m</div>
<div class="a" style="left:992px;top:314px;white-space:nowrap;font-size:10px;line-height:11px;letter-spacing:0;transform:scaleX(.88);transform-origin:0 0;color:#f0f0f0;text-shadow:0 0 1px #000">0+200.000</div>
<div class="a" style="left:1086px;top:263px;white-space:nowrap;font-size:10px;line-height:11px;letter-spacing:0;transform:scaleX(.88);transform-origin:0 0;color:#f0f0f0;text-shadow:0 0 1px #000">0+300.000</div>
<div class="a" style="left:1117px;top:244px;white-space:nowrap;font-size:10px;line-height:11px;letter-spacing:0;transform:scaleX(.88);transform-origin:0 0;color:#1f9a1f;text-shadow:0 0 1px #000">PT</div>
<div class="a" style="left:1137px;top:245px;white-space:nowrap;font-size:10px;line-height:11px;letter-spacing:0;transform:scaleX(.88);transform-origin:0 0;color:#f0f0f0;text-shadow:0 0 1px #000">0+350.000</div>
<div class="a" style="left:1137px;top:257px;white-space:nowrap;font-size:10px;line-height:11px;letter-spacing:0;transform:scaleX(.88);transform-origin:0 0;color:#e8e020;text-shadow:0 0 1px #000">R=500m</div>
<div class="a" style="left:1217px;top:213px;white-space:nowrap;font-size:10px;line-height:11px;letter-spacing:0;transform:scaleX(.88);transform-origin:0 0;color:#1f9a1f;text-shadow:0 0 1px #000">POE</div>
<div class="a" style="left:1200px;top:226px;white-space:nowrap;font-size:10px;line-height:11px;letter-spacing:0;transform:scaleX(.88);transform-origin:0 0;color:#f0f0f0;text-shadow:0 0 1px #000">0+410.000</div>
<!-- LEFT CANVAS TOOLBAR ICONS -->
<svg style="left:253px;top:530px" width="13" height="13"><rect x=".5" y=".5" width="12" height="12" fill="none" stroke="#eee" stroke-width="1"/><path d="M4.5 0v13M8.5 0v13M0 4.5h13M0 8.5h13" stroke="#eee" stroke-width="1"/><path d="M0.5 12.5 L12.5 0.5" stroke="#3a3a3a" stroke-width="3"/><path d="M0.5 12.5 L12.5 0.5" stroke="#fff" stroke-width="1.2"/></svg>
<svg style="left:279px;top:530px" width="13" height="13"><path d="M1 13 V6 A5.5 5.5 0 0 1 12 6 V13 Z" fill="none" stroke="#5c5c5c" stroke-width="1.4"/><path d="M4 13 V7 A2.5 2.5 0 0 1 9 7 V13" fill="#4a4a4a"/></svg>
<svg style="left:298px;top:530px" width="13" height="13"><path d="M1 13 V6 A5.5 5.5 0 0 1 12 6 V13 Z" fill="none" stroke="#ddd" stroke-width="1.5"/><path d="M3.5 12 V7 A3 3 0 0 1 9.5 7 V12Z" fill="#222"/><circle cx="10" cy="10.5" r="2.3" fill="#f2a400"/></svg>
<svg style="left:317px;top:530px" width="12" height="13"><path d="M.7 .7 H6 L7.5 2.2 V10 H.7Z" fill="none" stroke="#ddd" stroke-width="1.2"/><path d="M4 3 H9.3 L11.3 5 V12.3 H4Z" fill="#8a8a8a" stroke="#ddd" stroke-width="1.2"/></svg>
<div class="a" style="left:333px;top:527px;width:66px;height:18px;background:#e1e1e1"></div>
<div class="t" style="left:340px;top:531px;color:#333">Profile 1</div>
<svg style="left:388px;top:534px" width="7" height="4"><path d="M0 0h7L3.5 4z" fill="#222"/></svg>
<svg style="left:402px;top:530px" width="13" height="13"><path d="M1 13 V6 A5.5 5.5 0 0 1 12 6 V13" fill="none" stroke="#5c5c5c" stroke-width="1.4"/><path d="M3 11 L6 8" stroke="#5a7e8a" stroke-width="1.5"/></svg>
<svg style="left:421px;top:530px" width="13" height="13"><path d="M1 13 V6 A5.5 5.5 0 0 1 12 6 V13" fill="none" stroke="#5c5c5c" stroke-width="1.4"/><path d="M4 13 V7 A2.5 2.5 0 0 1 9 7 V13" fill="none" stroke="#5c5c5c" stroke-width="1.2"/></svg>
<svg style="left:677px;top:530px" width="13" height="13"><rect x=".7" y=".7" width="11.6" height="11.6" fill="#5a7e8a" stroke="#eee" stroke-width="1.2"/><rect x="8" y="1" width="4" height="11" fill="#eee"/><path d="M8 1v11" stroke="#333"/></svg>
<svg style="left:702px;top:530px" width="13" height="13"><rect x=".7" y=".7" width="11.6" height="11.6" fill="#5a7e8a" stroke="#eee" stroke-width="1.2"/><rect x="1" y="8" width="11" height="4" fill="#eee"/><path d="M1 8h11" stroke="#333"/></svg>
<svg style="left:725px;top:539px" width="5" height="4"><path d="M0 0h5L2.5 3z" fill="#666"/></svg>
<!-- RIGHT CANVAS TOOLBAR ICONS -->
<svg style="left:754px;top:529px" width="15" height="15"><circle cx="7.5" cy="7.5" r="6.5" fill="none" stroke="#eee" stroke-width="1.3"/><circle cx="7.5" cy="7.5" r="3.6" fill="none" stroke="#eee" stroke-width="1.1"/><path d="M3 3 L6 6 M12 3 L9 6 M3 12 L6 9 M12 12 L9 9" stroke="#eee" stroke-width="1"/></svg>
<svg style="left:776px;top:534px" width="6" height="4"><path d="M0 0h6L3 3.5z" fill="#eee"/></svg>
<svg style="left:795px;top:529px" width="14" height="15"><path d="M1 7 H7 V14 H1Z" fill="none" stroke="#eee" stroke-width="1.2"/><path d="M1 7 L7 1 H13 L7 7 M7 14 L13 8 V1" fill="none" stroke="#eee" stroke-width="1.2"/></svg>
<svg style="left:816px;top:534px" width="6" height="4"><path d="M0 0h6L3 3.5z" fill="#eee"/></svg>
<svg style="left:836px;top:531px" width="11" height="11"><rect x=".7" y="3" width="7.5" height="7.5" fill="none" stroke="#eee" stroke-width="1.2"/><path d="M.7 3 L3 .7 H10.3 V8 L8.2 10.5 M8.2 3 L10.3 .7" fill="none" stroke="#eee" stroke-width="1.1"/><rect x="3" y="1" width="6" height="2" fill="#6fb6d6"/></svg>
<svg style="left:856px;top:534px" width="6" height="4"><path d="M0 0h6L3 3.5z" fill="#eee"/></svg>
<svg style="left:878px;top:529px" width="14" height="14"><rect x=".5" y=".5" width="13" height="13" fill="none" stroke="#eee" stroke-width="1"/><path d="M5 0v14M9.5 0v14M0 5h14M0 9.5h14" stroke="#eee" stroke-width="1"/><path d="M0.5 13.5 L13.5 0.5" stroke="#3a3a3a" stroke-width="3"/><path d="M0.5 13.5 L13.5 0.5" stroke="#fff" stroke-width="1.2"/></svg>
<svg style="left:904px;top:530px" width="12" height="12"><path d="M1.5 6 A4.5 4.5 0 0 1 9.5 3" fill="none" stroke="#1e9e46" stroke-width="1.5"/><path d="M10.5 6 A4.5 4.5 0 0 1 2.5 9" fill="none" stroke="#1e9e46" stroke-width="1.5"/><path d="M8 1 L11 3.5 L8 5Z M4 11 L1 8.5 L4 7Z" fill="#1e9e46"/></svg>
<svg style="left:1259px;top:539px" width="5" height="4"><path d="M0 0h5L2.5 3z" fill="#666"/></svg>
<!-- BOTTOM NAV TOOLBAR -->
<div class="a" style="left:227px;top:797px;width:131px;height:18px;background:#3c3c3c"></div>
<svg style="left:232px;top:803px" width="8" height="8"><path d="M1 0v8" stroke="#707070" stroke-width="1.5"/><path d="M7.5 0 L2.5 4 L7.5 8Z" fill="#707070"/></svg>
<svg style="left:247px;top:803px" width="6" height="8"><path d="M5.5 0 L0.5 4 L5.5 8Z" fill="#707070"/></svg>
<div class="t w" style="left:275px;top:801px">0+000.000 m</div>
<svg style="left:337px;top:803px" width="6" height="8"><path d="M0.5 0 L5.5 4 L0.5 8Z" fill="#707070"/></svg>
<svg style="left:348px;top:803px" width="8" height="8"><path d="M7 0v8" stroke="#707070" stroke-width="1.5"/><path d="M0.5 0 L5.5 4 L0.5 8Z" fill="#707070"/></svg>
<div class="a" style="left:358px;top:797px;width:772px;height:19px;background:#a3a3a3;border:1px solid #333;border-radius:2px"></div>
<div class="a" style="left:362px;top:802px;width:764px;height:9px;background:#000"></div>
<div class="a" style="left:359px;top:799px;width:5px;height:15px;background:#fff;border:1px solid #555;border-radius:1px"></div>
<div class="a" style="left:1133px;top:798px;width:67px;height:18px;background:#dadada;border:1px solid #e6e6e6"></div>
<div class="t" style="left:1153px;top:801px;color:#333">Cancel</div>
<div class="a" style="left:1206px;top:798px;width:67px;height:18px;background:#dadada;border:1px solid #e6e6e6"></div>
<div class="t" style="left:1228px;top:801px;color:#333">Apply</div>

<!-- PROPERTY GRID -->
<div class="a" style="left:1280px;top:118px;width:215px;height:701px;background:#a2a2a2"></div>
<div class="a" style="left:1283px;top:121px;width:209px;height:18px;background:#7b7b7b"></div>
<svg style="left:1286px;top:124px" width="13" height="12"><rect x=".6" y=".6" width="11.8" height="10.8" fill="none" stroke="#eee" stroke-width="1.1"/><path d="M2.5 3.5h1M5 3.5h5.5M2.5 6h1M5 6h5.5M2.5 8.5h1M5 8.5h5.5" stroke="#eee" stroke-width="1"/></svg>
<div class="t w h" style="left:1302px;top:124px">Property Grid</div>
<svg style="left:1478px;top:126px" width="10" height="9"><path d="M2 1.8 L8 7.2 M8 1.8 L2 7.2" stroke="#fff" stroke-width="3.2" stroke-linecap="round"/><path d="M2.2 2 L7.8 7 M7.8 2 L2.2 7" stroke="#1a1a1a" stroke-width="1.2"/></svg>
<div class="a" style="left:1284px;top:146px;width:207px;height:17px;background:#d9d9d9"></div>
<svg style="left:1481px;top:153px" width="6" height="3"><path d="M0 0h6L3 3z" fill="#999"/></svg>

<!-- STATUS BAR -->
<div class="a" style="left:0;top:819px;width:1500px;height:25px;background:#3e3e3e"></div>
<div class="a" style="left:0;top:841px;width:1500px;height:3px;background:#474747"></div>
<div class="a" style="left:8px;top:826px;width:13px;height:12px;background:linear-gradient(#e8e8e8,#b0b0b0);border-radius:2px"></div>
<svg style="left:8px;top:826px" width="13" height="12"><path d="M3 9 L6 5 M6 9 L10 3" stroke="#fff" stroke-width="1.2"/></svg>
<div class="a" style="left:24px;top:826px;width:13px;height:12px;background:linear-gradient(#e8e8e8,#b0b0b0);border-radius:2px"></div>
<svg style="left:24px;top:826px" width="13" height="12"><path d="M2 9 L5 5 L7 8 L9 5 L11 9" stroke="#555" stroke-width="1" fill="none"/></svg>
<div class="a" style="left:1171px;top:825px;width:17px;height:16px;background:#777"></div>
<div class="a" style="left:1191px;top:825px;width:17px;height:16px;background:#777"></div>
<div class="a" style="left:1212px;top:825px;width:17px;height:16px;background:#777"></div>
<svg style="left:1173px;top:826px" width="13" height="13"><circle cx="6.5" cy="6.5" r="5.5" fill="none" stroke="#eee" stroke-width="1.3"/><path d="M4 4 L9 9" stroke="#eee" stroke-width="1.5"/><circle cx="6.5" cy="6.5" r="1.8" fill="#eee"/></svg>
<svg style="left:1193px;top:826px" width="13" height="14"><path d="M3 1 H9 L12 4 V13 H3 V10" fill="none" stroke="#eee" stroke-width="1.1"/><circle cx="6.5" cy="7.5" r="3" fill="none" stroke="#eee" stroke-width="1.1"/><path d="M4.5 9.5 L1 13" stroke="#eee" stroke-width="1.5"/></svg>
<svg style="left:1214px;top:827px" width="13" height="12"><rect x=".6" y=".6" width="11.8" height="10.8" fill="none" stroke="#eee" stroke-width="1.1"/><path d="M2.5 3.5h1M5 3.5h5.5M2.5 6h1M5 6h5.5M2.5 8.5h1M5 8.5h5.5" stroke="#eee" stroke-width="1"/></svg>
<svg style="left:1233px;top:826px" width="15" height="13"><path d="M1 3 L4 1 H14 L11 3Z M1 6.5 L4 4.5 H14 L11 6.5Z M1 10 L4 8 H14 L11 10Z" fill="none" stroke="#eee" stroke-width="1.1"/></svg>
<svg style="left:1254px;top:826px" width="14" height="14"><rect x="1" y="1" width="6" height="12" fill="none" stroke="#eee" stroke-width="1.2"/><path d="M3 4h2M3 7h2M3 10h2" stroke="#eee"/><rect x="8" y="7" width="5" height="6" fill="none" stroke="#eee" stroke-width="1.2"/></svg>
<svg style="left:1275px;top:826px" width="13" height="14"><rect x="1" y="5" width="11" height="8" fill="#eee"/><path d="M1 2.5 L11 0.5 L11.5 3 L1.5 5Z" fill="#eee"/><path d="M3 7h7M3 9.5h7" stroke="#555"/></svg>
<svg style="left:1302px;top:826px" width="15" height="15"><path d="M2 13 L13 2" stroke="#eee" stroke-width="1.2" stroke-dasharray="2 1"/><circle cx="2" cy="13" r="1.6" fill="#eee"/><circle cx="13" cy="2" r="1.6" fill="#eee"/></svg>
<div class="t w" style="left:1318px;top:827px">Meter</div>
<svg style="left:1351px;top:831px" width="7" height="4"><path d="M0 0h7L3.5 4z" fill="#eee"/></svg>
<svg style="left:1372px;top:825px" width="16" height="16"><path d="M2 15 L2 3 M2 15 L14 3" stroke="#eee" stroke-width="1.1" stroke-dasharray="2 1"/><circle cx="2" cy="3" r="1.5" fill="#eee"/><circle cx="14" cy="3" r="1.5" fill="#eee"/><circle cx="2" cy="15" r="1.2" fill="#eee"/></svg>
<div class="t w" style="left:1388px;top:827px">Gons</div>
<svg style="left:1419px;top:831px" width="7" height="4"><path d="M0 0h7L3.5 4z" fill="#eee"/></svg>
<svg style="left:1440px;top:825px" width="15" height="15"><path d="M0 5 L6 1 L14 2 L8 6Z" fill="#ccc"/><circle cx="8" cy="10" r="4" fill="#ddd"/><circle cx="8" cy="10" r="1.5" fill="#555"/></svg>
<div class="t w" style="left:1456px;top:827px">None</div>
<svg style="left:1486px;top:831px" width="7" height="4"><path d="M0 0h7L3.5 4z" fill="#eee"/></svg>
</body></html>
